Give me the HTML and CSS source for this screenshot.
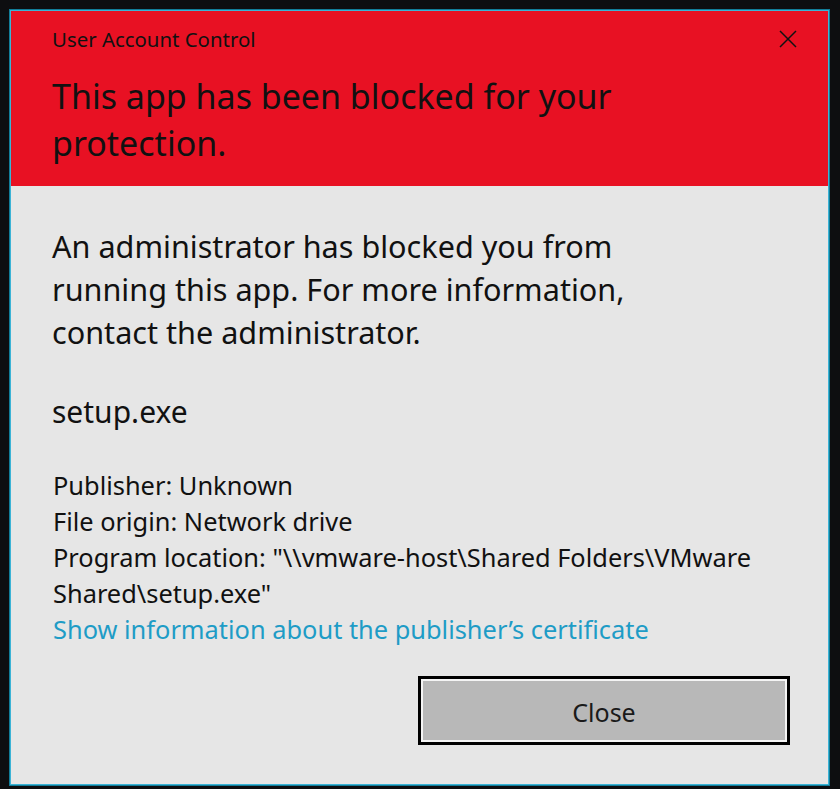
FILE: index.html
```html
<!DOCTYPE html>
<html>
<head>
<meta charset="utf-8">
<link rel="stylesheet" href="styles.css">
</head>
<body>
<div class="window">
  <div class="header">
    <div class="titlebar">
      <span class="title">User Account Control</span>
      <span class="close-x">
        <svg width="18" height="18" viewBox="0 0 18 18"><path d="M1 1 L17 17 M17 1 L1 17" stroke="#111" stroke-width="1.5" fill="none"/></svg>
      </span>
    </div>
    <h1 class="heading">This app has been blocked for your<br>protection.</h1>
  </div>
  <div class="content">
    <p class="message">An administrator has blocked you from<br>running this app. For more information,<br>contact the administrator.</p>
    <p class="filename">setup.exe</p>
    <div class="info">
      <div>Publisher: Unknown</div>
      <div>File origin: Network drive</div>
      <div>Program location: "\\vmware-host\Shared Folders\VMware<br>Shared\setup.exe"</div>
      <div class="link">Show information about the publisher’s certificate</div>
    </div>
    <div class="actions">
      <button class="btn">Close</button>
    </div>
  </div>
</div>
</body>
</html>
```
FILE: styles.css
```css
html, body {
  margin: 0;
  padding: 0;
  background: #0d0e10;
  width: 840px;
  height: 789px;
  overflow: hidden;
}
body {
  font-family: "Noto Sans", "Open Sans", sans-serif;
  color: #111;
}
.window {
  margin: 9px 0 0 9px;
  width: 819px;
  height: 775px;
  border: 1px solid #127d98;
  box-shadow: inset 0 0 0 1px #3bb3d6;
  background: #e6e6e6;
  display: flex;
  flex-direction: column;
}
.header {
  background: #e81123;
  margin: 1px 1px 0 1px;
  padding: 16px 0 19px 41px;
}
.titlebar {
  display: flex;
  align-items: center;
  justify-content: space-between;
  height: 24px;
  padding-right: 31px;
}
.title {
  font-size: 20.4px;
  line-height: 24px;
}
.close-x {
  display: flex;
  width: 18px;
  height: 18px;
}
.heading {
  margin: 22px 0 0 0;
  font-weight: normal;
  font-size: 34px;
  line-height: 47px;
}
.content {
  padding: 39px 0 0 42px;
}
.message {
  margin: 0;
  font-size: 30.6px;
  line-height: 43px;
}
.filename {
  margin: 38px 0 0 0;
  font-size: 30px;
  line-height: 40px;
}
.info {
  margin-top: 35px;
  font-size: 25.4px;
  line-height: 36px;
  padding-left: 1px;
}
.link {
  color: #1e9cc6;
}
.actions {
  display: flex;
  justify-content: flex-end;
  margin-top: 29px;
  padding-right: 39px;
}
.btn {
  width: 372px;
  height: 69px;
  border: 3px solid #000;
  box-shadow: inset 0 0 0 2px #f4f4f4;
  background: #b8b8b8;
  font-family: "Noto Sans", "Open Sans", sans-serif;
  font-size: 25px;
  color: #1a1a1a;
  padding: 2px 0 0 0;
}
```
